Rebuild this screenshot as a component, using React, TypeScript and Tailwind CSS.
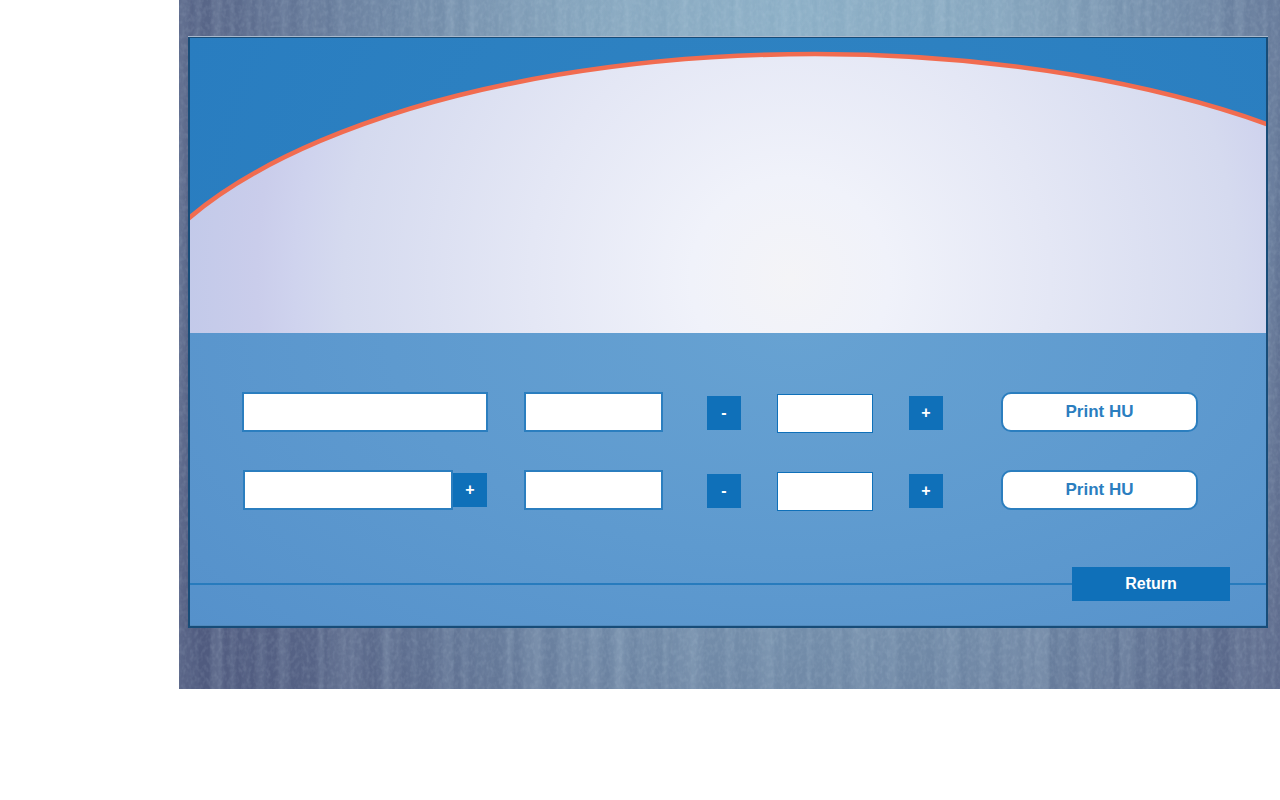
import React from "react";

const fieldClass =
  "block h-10 rounded-none border-2 border-[#2b7ebf] bg-white px-2 text-base text-[#2b7ebf] outline-none";
const squareClass =
  "flex size-[34px] shrink-0 items-center justify-center bg-[#0f70b9] text-base leading-5 font-bold text-white";

function Backdrop() {
  return (
    <svg className="absolute inset-0 size-full" aria-hidden="true">
      <filter id="ribs" x="0" y="0" width="100%" height="100%">
        <feTurbulence type="fractalNoise" baseFrequency="0.09 0.001" numOctaves="2" seed="4" />
        <feColorMatrix values="0 0 0 0 0.65  0 0 0 0 0.8  0 0 0 0 0.9  1.2 0 0 0 -0.45" />
      </filter>
      <filter id="grain" x="0" y="0" width="100%" height="100%">
        <feTurbulence type="fractalNoise" baseFrequency="0.25 0.18" numOctaves="2" seed="9" />
        <feColorMatrix values="0 0 0 0 0.68  0 0 0 0 0.8  0 0 0 0 0.9  1 0 0 0 -0.4" />
      </filter>
      <rect width="100%" height="100%" filter="url(#ribs)" opacity="0.3" />
      <rect width="100%" height="100%" filter="url(#grain)" opacity="0.25" />
    </svg>
  );
}

function Banner() {
  return (
    <svg
      className="block h-[295px] w-full"
      viewBox="0 0 1076 295"
      preserveAspectRatio="none"
      aria-hidden="true"
    >
      <defs>
        <radialGradient id="glow" gradientUnits="userSpaceOnUse" cx="600" cy="240" r="620">
          <stop offset="0" stopColor="#f4f4f7" />
          <stop offset="0.16" stopColor="#f0f2fa" />
          <stop offset="0.42" stopColor="#e4e7f5" />
          <stop offset="0.72" stopColor="#d5daef" />
          <stop offset="0.8" stopColor="#cfd3ee" />
          <stop offset="0.86" stopColor="#cacdeb" />
          <stop offset="1" stopColor="#c1c9e9" />
        </radialGradient>
        <radialGradient id="sky" gradientUnits="userSpaceOnUse" cx="600" cy="240" r="650">
          <stop offset="0" stopColor="#3084c2" />
          <stop offset="1" stopColor="#297dc0" />
        </radialGradient>
      </defs>
      <rect width="1076" height="295" fill="url(#sky)" />
      <ellipse cx="625" cy="313" rx="700" ry="297" fill="url(#glow)" stroke="#f16c50" strokeWidth="4.6" />
    </svg>
  );
}

function Stepper({ label }: { label: string }) {
  return (
    <div className="ml-2 flex items-center gap-9 pt-[2px]">
      <button type="button" className={squareClass} aria-label={`Decrease ${label}`}>
        -
      </button>
      <input
        type="text"
        aria-label={label}
        className="block h-[39px] w-24 rounded-none border border-[#0f70b9] bg-white px-2 text-base outline-none"
      />
      <button type="button" className={squareClass} aria-label={`Increase ${label}`}>
        +
      </button>
    </div>
  );
}

function PrintButton() {
  return (
    <button
      type="button"
      className="ml-[22px] h-10 w-[197px] shrink-0 rounded-[10px] border-2 border-[#2b7ebf] bg-white text-[17px] leading-5 font-bold text-[#2b7ebf]"
    >
      Print HU
    </button>
  );
}

export default function App() {
  return (
    <div className="min-h-screen bg-white pl-[179px] font-['Liberation_Sans',Arial,sans-serif]">
      <main className="relative bg-[radial-gradient(ellipse_62%_165%_at_56%_5%,#8cafc6_0%,#86a6be_30%,#6e86a4_60%,#596789_85%,#505b7f_100%)] px-[9px] pt-9 pb-[61px]">
        <Backdrop />
        <div className="relative mr-[3px] border-t border-[#a9b9cc]">
          <section className="border-x-2 border-t border-b-2 border-[#174c78] bg-[#5b98cf]">
            <Banner />
            <div className="bg-[radial-gradient(ellipse_75%_150%_at_56%_0%,#67a2d2_0%,#5e9acf_50%,#5591cb_100%)]">
              <form className="flex flex-col gap-[38px] pt-[59px] pr-[68px] pl-[52px]">
                <div className="flex h-10 items-center gap-9">
                  <input type="text" aria-label="First item" className={`${fieldClass} min-w-0 flex-1`} />
                  <input type="text" aria-label="First batch" className={`${fieldClass} w-[139px]`} />
                  <Stepper label="first quantity" />
                  <PrintButton />
                </div>
                <div className="flex h-10 items-center gap-9">
                  <div className="flex min-w-0 flex-1 items-center px-px">
                    <input type="text" aria-label="Second item" className={`${fieldClass} min-w-0 flex-1`} />
                    <button type="button" className={squareClass} aria-label="Add item">
                      +
                    </button>
                  </div>
                  <input type="text" aria-label="Second batch" className={`${fieldClass} w-[139px]`} />
                  <Stepper label="second quantity" />
                  <PrintButton />
                </div>
              </form>
              <footer className="flex items-center pt-[57px] pb-6">
                <div className="h-[2px] flex-1 bg-[#277bbd]" />
                <button
                  type="button"
                  className="h-[34px] w-[158px] bg-[#0f70b9] text-base leading-5 font-bold text-white"
                >
                  Return
                </button>
                <div className="h-[2px] w-9 bg-[#277bbd]" />
              </footer>
              <div className="h-px bg-[#4f88bb]" />
            </div>
          </section>
        </div>
      </main>
    </div>
  );
}
